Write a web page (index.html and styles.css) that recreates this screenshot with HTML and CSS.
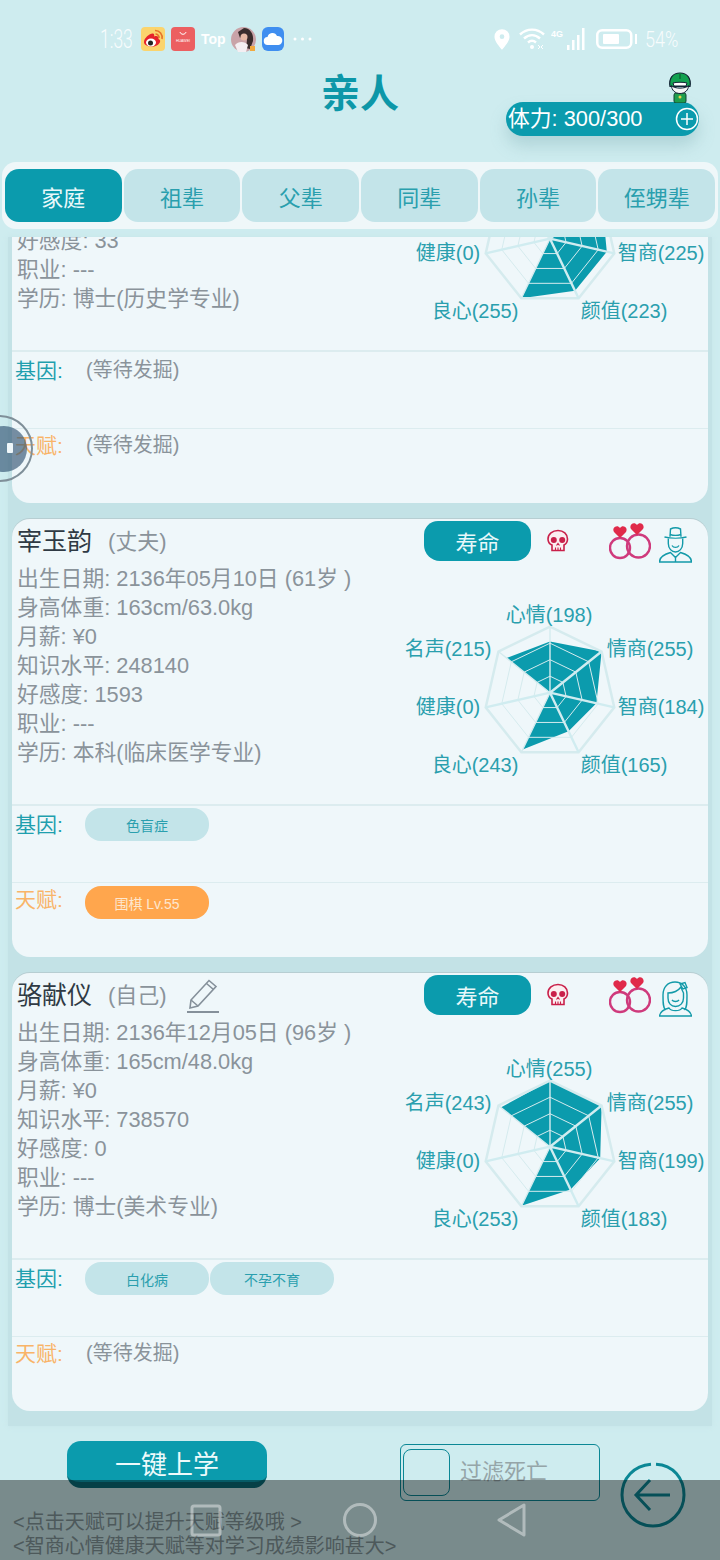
FILE: index.html
```html
<!DOCTYPE html>
<html lang="zh-CN">
  <head>
    <meta charset="utf-8" />
    <title>亲人</title>
    <link rel="stylesheet" href="styles.css">
  </head>

  <body>
    <div class="screen">
      <!-- Status bar -->
      <div class="status-bar">
        <div class="status-left">
          <span class="status-time">1:33</span>
          <svg class="app-icon" width="24" height="24" viewBox="0 0 24 24">
            <rect width="24" height="24" rx="4" fill="#fbd46d"/>
            <path d="M3 15c0-4 6-9 9-8.500 2 .5 1 3 1 3 3-1 5 0 4.500 2.500 2 1 2 2.500 1 4-2 3-6 4-9 3.500-4-.5-6.500-2-6.500-4.500z" fill="#e6232b"/>
            <ellipse cx="10" cy="15.500" rx="5" ry="4" fill="#fff"/>
            <circle cx="9.500" cy="16" r="2.500" fill="#222"/>
            <path d="M14 3.500a7 7 0 0 1 7 8.500M14.500 7a3.500 3.500 0 0 1 3.500 4" fill="none" stroke="#e6732b" stroke-width="1.600"/>
          </svg>
          <svg class="app-icon" width="24" height="24" viewBox="0 0 24 24">
            <rect width="24" height="24" rx="4" fill="#ec5f61"/>
            <path d="M9 5c.6 3 5.400 3 6 0" fill="none" stroke="#fff" stroke-width="1"/>
            <text x="12" y="14.500" class="huawei-text">HUAWEI</text>
          </svg>
          <span class="status-top">Top</span>
          <svg class="app-icon" width="25" height="25" viewBox="0 0 25 25">
            <circle cx="12.500" cy="12.500" r="12.500" fill="#c9a3a8"/>
            <path d="M13 1c6 0 10 6 9 13l-3 8-4-1 1-8-3-6-4 4-2-6z" fill="#3a2c2c"/>
            <circle cx="13" cy="10" r="3.500" fill="#e7b9a5"/>
            <path d="M4 18c3-4 10-4 13 0l-2 7H7z" fill="#f4eef2"/>
            <rect x="19" y="19" width="5" height="5" fill="#f2a93e"/>
          </svg>
          <svg class="app-icon" width="22" height="24" viewBox="0 0 22 24">
            <rect width="22" height="24" rx="6" fill="#3f8ef0"/>
            <path d="M6 18a4 4 0 0 1-.5-8 5 5 0 0 1 9.500-1 4.500 4.500 0 0 1 1.500 9z" fill="#fff"/>
          </svg>
          <svg class="status-more" width="19" height="4" viewBox="0 0 19 4" fill="#fff">
            <circle cx="2" cy="2" r="1.500"/>
            <circle cx="9.500" cy="2" r="1.500"/>
            <circle cx="17" cy="2" r="1.500"/>
          </svg>
        </div>
        <div class="status-right">
          <svg width="16" height="21" viewBox="0 0 17 22">
            <path fill-rule="evenodd" d="M8.500 0a8 8 0 0 1 8 8c0 5-5 10-8 14-3-4-8-9-8-14a8 8 0 0 1 8-8zm0 5.500a2.500 2.500 0 1 0 0 5 2.500 2.500 0 0 0 0-5z" fill="#fff"/>
          </svg>
          <svg class="wifi-icon" width="28" height="22" viewBox="0 0 28 22" fill="none" stroke="#fff" stroke-width="2.400">
            <path d="M1 6.500c7-6.500 17-6.500 24 0M5 10.500c5-4.500 11-4.500 16 0M9 14.500c2.500-2.200 5.500-2.200 8 0"/>
            <circle cx="13" cy="19" r="2" fill="#fff" stroke="none"/>
            <path d="M19 17l2 2-2 2M24 17l-2 2 2 2" stroke-width="1"/>
          </svg>
          <svg class="signal-icon" width="36" height="22" viewBox="0 0 36 22">
            <text x="0" y="9" class="signal-text">4G</text>
            <g fill="#fff">
              <rect x="16" y="17" width="2.500" height="5"/>
              <rect x="21" y="12" width="2.500" height="10"/>
              <rect x="26" y="7" width="2.500" height="15"/>
              <rect x="31" y="0" width="2.500" height="22"/>
            </g>
          </svg>
          <svg class="battery-icon" width="41" height="20" viewBox="0 0 41 20">
            <rect x="1.250" y="1.250" width="34" height="17.500" rx="5" fill="none" stroke="#fff" stroke-width="2.500"/>
            <rect x="7" y="5" width="16" height="10" rx="1" fill="#fff"/>
            <rect x="39" y="5" width="2" height="10" fill="#fff"/>
          </svg>
          <span class="status-battery">54%</span>
        </div>
      </div>

      <!-- Title row -->
      <div class="title-row">
        <h1 class="page-title">亲人</h1>
        <div class="stamina">
          <span class="stamina-text">体力: 300/300</span>
          <svg width="24" height="24" viewBox="0 0 24 24" fill="none" stroke="#fff" stroke-width="1.500">
            <circle cx="12" cy="12" r="10.500"/>
            <path d="M12 6v12M6 12h12"/>
          </svg>
        </div>
      </div>

      <!-- Generation tabs -->
      <div class="tabs">
        <div class="tab tab-active">家庭</div>
        <div class="tab">祖辈</div>
        <div class="tab">父辈</div>
        <div class="tab">同辈</div>
        <div class="tab">孙辈</div>
        <div class="tab">侄甥辈</div>
      </div>

      <!-- Relatives list, scrolled part way through the first card -->
      <div class="list">
        <div class="card card-first">
          <div class="card-top">
            <div class="info">
              <div class="name-row"><span class="name">---</span> <span class="relation">(父亲)</span></div>
              <div class="info-line">出生日期: ---</div>
              <div class="info-line">身高体重: ---</div>
              <div class="info-line">月薪: ¥0</div>
              <div class="info-line">知识水平: ---</div>
              <div class="info-line">好感度: 33</div>
              <div class="info-line">职业: ---</div>
              <div class="info-line">学历: 博士(历史学专业)</div>
            </div>
            <div class="side">
              <div class="actions">
                <div class="life-btn">寿命</div>
              </div>
              <svg class="radar" width="304" height="180" viewBox="0 0 304 180">
                <defs>
                  <g id="radar-grid" fill="none">
                    <polygon class="ring-outer" points="0,-66 51.600,-41.200 64.300,14.700 28.600,59.500 -28.600,59.500 -64.300,14.700 -51.600,-41.200"/>
                    <polygon class="ring" transform="scale(.75)" points="0,-66 51.600,-41.200 64.300,14.700 28.600,59.500 -28.600,59.500 -64.300,14.700 -51.600,-41.200"/>
                    <polygon class="ring" transform="scale(.5)" points="0,-66 51.600,-41.200 64.300,14.700 28.600,59.500 -28.600,59.500 -64.300,14.700 -51.600,-41.200"/>
                    <polygon class="ring" transform="scale(.25)" points="0,-66 51.600,-41.200 64.300,14.700 28.600,59.500 -28.600,59.500 -64.300,14.700 -51.600,-41.200"/>
                    <path class="spoke" d="M0 0L0 -66M0 0L-28.600 59.500M0 0L-51.600 -41.200"/>
                    <path class="spoke-thick" d="M0 0L51.600 -41.200M0 0L64.300 14.700M0 0L28.600 59.500M0 0L-64.300 14.700"/>
                  </g>
                  <g id="icon-skull">
                    <path d="M11 1.500c5.500 0 9.500 3.500 9.500 8.500 0 3-1.500 5-3.500 6v5.500H5V16C2.500 15 1 13 1 10c0-5 4.500-8.500 10-8.500z" fill="#fbeef0" stroke="#c9204a" stroke-width="1.600"/>
                    <circle cx="6.800" cy="11" r="3" fill="#c9204a"/>
                    <circle cx="15.200" cy="11" r="3" fill="#c9204a"/>
                    <path d="M9.500 16.500l1.500-2 1.500 2M8.500 18.500v3M11 18.500v3M13.500 18.500v3" fill="none" stroke="#c9204a" stroke-width="1.100"/>
                  </g>
                  <g id="icon-rings">
                    <circle cx="11" cy="25" r="10" fill="none" stroke="#cf3a7c" stroke-width="2.400"/>
                    <circle cx="29.500" cy="23" r="11.500" fill="none" stroke="#cf3a7c" stroke-width="2.400"/>
                    <path transform="translate(11 8)" d="M0 7L-6 1C-8.500-3-3-7 0-3C3-7 8.500-3 6 1z" fill="#e02a4a"/>
                    <path transform="translate(28 5)" d="M0 7L-6 1C-8.500-3-3-7 0-3C3-7 8.500-3 6 1z" fill="#e02a4a"/>
                  </g>
                </defs>
                <g transform="translate(146 92.700)">
                  <polygon class="radar-value" points="0,-60 51.600,-41.200 56.800,13 25,52 -28.600,59.500 0,0 -40,-32"/>
                  <use href="#radar-grid"/>
                </g>
                <text class="radar-label" x="145" y="22">心情(200)</text>
                <text class="radar-label" x="246" y="56">情商(255)</text>
                <text class="radar-label" x="257" y="114">智商(225)</text>
                <text class="radar-label" x="220" y="172">颜值(223)</text>
                <text class="radar-label" x="71" y="172">良心(255)</text>
                <text class="radar-label" x="44" y="114">健康(0)</text>
                <text class="radar-label" x="44" y="56">名声(200)</text>
              </svg>
            </div>
          </div>
          <div class="trait-row">
            <span class="trait-label">基因:</span>
            <span class="pending">(等待发掘)</span>
          </div>
          <div class="trait-row">
            <span class="trait-label trait-talent">天赋:</span>
            <span class="pending">(等待发掘)</span>
          </div>
        </div>

        <div class="card">
          <div class="card-top">
            <div class="info">
              <div class="name-row"><span class="name">宰玉韵</span> <span class="relation">(丈夫)</span></div>
              <div class="info-line">出生日期: 2136年05月10日 (61岁 )</div>
              <div class="info-line">身高体重: 163cm/63.0kg</div>
              <div class="info-line">月薪: ¥0</div>
              <div class="info-line">知识水平: 248140</div>
              <div class="info-line">好感度: 1593</div>
              <div class="info-line">职业: ---</div>
              <div class="info-line">学历: 本科(临床医学专业)</div>
            </div>
            <div class="side">
              <div class="actions">
                <div class="life-btn">寿命</div>
                <svg class="skull" width="22" height="24" viewBox="0 0 22 24"><use href="#icon-skull"/></svg>
                <svg class="rings" width="42" height="37" viewBox="0 0 42 37"><use href="#icon-rings"/></svg>
                <svg class="person" width="33" height="36" viewBox="0 0 33 36" fill="none" stroke="#139aa9" stroke-width="1.400">
                  <path d="M11 9.700L11.500 2c3-1.500 7-1.500 10 0l.5 7.700"/>
                  <path d="M5.500 10c6 1.500 16 1.500 22 0"/>
                  <path d="M11 7.500c3 1 8 1 11 0"/>
                  <path d="M9.300 11.500v5c0 5 3.500 8.500 7.200 8.500s7.200-3.500 7.200-8.500v-5"/>
                  <path d="M13 18.500c1.500 2.500 5.500 2.500 7 0"/>
                  <path d="M0.500 35c0-5 4-7.500 11-9.500l5 5 5-5c7 2 11 4.500 11 9.500z"/>
                  <path d="M16.500 30.500v4.500"/>
                </svg>
              </div>
              <svg class="radar" width="304" height="180" viewBox="0 0 304 180">
                <g transform="translate(146 92.700)">
                  <polygon class="radar-value" points="0,-51.200 51.600,-41.200 46.400,10.600 18.500,38.500 -27.300,56.700 0,0 -43.500,-34.700"/>
                  <use href="#radar-grid"/>
                </g>
                <text class="radar-label" x="145" y="22">心情(198)</text>
                <text class="radar-label" x="246" y="56">情商(255)</text>
                <text class="radar-label" x="257" y="114">智商(184)</text>
                <text class="radar-label" x="220" y="172">颜值(165)</text>
                <text class="radar-label" x="71" y="172">良心(243)</text>
                <text class="radar-label" x="44" y="114">健康(0)</text>
                <text class="radar-label" x="44" y="56">名声(215)</text>
              </svg>
            </div>
          </div>
          <div class="trait-row">
            <span class="trait-label">基因:</span>
            <span class="chip">色盲症</span>
          </div>
          <div class="trait-row">
            <span class="trait-label trait-talent">天赋:</span>
            <span class="chip chip-talent">围棋 Lv.55</span>
          </div>
        </div>

        <div class="card">
          <div class="card-top">
            <div class="info">
              <div class="name-row">
                <span class="name">骆献仪</span> <span class="relation">(自己)</span>
                <svg class="pencil" width="32" height="36" viewBox="0 0 32 36" fill="none" stroke="#85909a" stroke-width="1.600">
                  <path d="M4 23L22 3.500l7 6L11 29l-8 2z"/>
                  <path d="M19.500 6.500l7 6M4 23l7 6"/>
                  <path d="M0 35h32" stroke-width="2"/>
                </svg>
              </div>
              <div class="info-line">出生日期: 2136年12月05日 (96岁 )</div>
              <div class="info-line">身高体重: 165cm/48.0kg</div>
              <div class="info-line">月薪: ¥0</div>
              <div class="info-line">知识水平: 738570</div>
              <div class="info-line">好感度: 0</div>
              <div class="info-line">职业: ---</div>
              <div class="info-line">学历: 博士(美术专业)</div>
            </div>
            <div class="side">
              <div class="actions">
                <div class="life-btn">寿命</div>
                <svg class="skull" width="22" height="24" viewBox="0 0 22 24"><use href="#icon-skull"/></svg>
                <svg class="rings" width="42" height="37" viewBox="0 0 42 37"><use href="#icon-rings"/></svg>
                <svg class="person" width="33" height="36" viewBox="0 0 33 36" fill="none" stroke="#139aa9" stroke-width="1.400">
                  <path d="M6.500 29C4 27 4 22 4 14 4 6 9 1 16 1s12 5 12 13c0 8 0 13-2.500 15"/>
                  <path d="M9 12c5 0 10-2 13-6 1 3 2 5 2.500 6v5c0 5-3.500 8.500-8 8.500S9 22 9 17z"/>
                  <path d="M13 19c1.500 2 5.500 2 7 0"/>
                  <path d="M21 3l5-1.500 2 5-4 1.500z"/>
                  <path d="M0.500 35c.5-4 4-6.500 9.500-8 2 3.500 11 3.500 13 0 5.500 1.500 9 4 9.500 8z"/>
                </svg>
              </div>
              <svg class="radar" width="304" height="180" viewBox="0 0 304 180">
                <g transform="translate(146 92.700)">
                  <polygon class="radar-value" points="0,-66 51.600,-41.200 50.200,11.500 20.600,42.700 -28.400,59 0,0 -49.200,-39.200"/>
                  <use href="#radar-grid"/>
                </g>
                <text class="radar-label" x="145" y="22">心情(255)</text>
                <text class="radar-label" x="246" y="56">情商(255)</text>
                <text class="radar-label" x="257" y="114">智商(199)</text>
                <text class="radar-label" x="220" y="172">颜值(183)</text>
                <text class="radar-label" x="71" y="172">良心(253)</text>
                <text class="radar-label" x="44" y="114">健康(0)</text>
                <text class="radar-label" x="44" y="56">名声(243)</text>
              </svg>
            </div>
          </div>
          <div class="trait-row">
            <span class="trait-label">基因:</span>
            <span class="chip">白化病</span>
            <span class="chip">不孕不育</span>
          </div>
          <div class="trait-row">
            <span class="trait-label trait-talent">天赋:</span>
            <span class="pending">(等待发掘)</span>
          </div>
        </div>
      </div>

      <!-- Bottom actions -->
      <div class="bottom-row">
        <div class="school-btn">一键上学</div>
        <div class="filter">
          <span class="filter-box"></span>
          <span class="filter-text">过滤死亡</span>
        </div>
        <svg class="back-icon" width="66" height="66" viewBox="0 0 66 66" fill="none" stroke="#0b8795" stroke-width="3">
          <path d="M36 2.200C53 3 64 16 64 33c0 17-14 31-31 31S2 50 2 33C2 16 14 3.500 31 2.200"/>
          <path d="M50 33H16M30 18L16 33l14 15"/>
        </svg>
      </div>
      <div class="hints">
        <div>&lt;点击天赋可以提升天赋等级哦 &gt;</div>
        <div>&lt;智商心情健康天赋等对学习成绩影响甚大&gt;</div>
      </div>

      <!-- System overlays -->
      <svg class="sprite" width="24" height="31" viewBox="0 0 24 31">
        <rect x="6" y="21" width="12" height="10" rx="2" fill="#1f9e4d" stroke="#143" stroke-width="1"/>
        <circle cx="12" cy="25" r="1.500" fill="#e8d44a"/>
        <path d="M2 14.500C.5 6 5 1 12 1s11.500 5 10 13.500z" fill="#12a150" stroke="#123" stroke-width="1.200"/>
        <path d="M3.500 13.500C6 17 18 17 20.500 13.500 20.500 18 17 21.500 12 21.500S3.500 18 3.500 13.500z" fill="#f6f6f6" stroke="#123" stroke-width="1"/>
        <path d="M5 11c3-1 11-1 14 0l-1 3H6z" fill="#fff" stroke="#123" stroke-width="1"/>
        <path d="M12 1v6" stroke="#0c7a3c" stroke-width="2"/>
      </svg>

      <div class="float-ball">
        <div class="float-ball-inner"><span class="float-ball-mark"></span></div>
      </div>

      <div class="nav-bar">
        <svg width="720" height="80" viewBox="0 0 720 80" fill="none" stroke="#fff" stroke-opacity=".42" stroke-width="3">
          <rect x="192" y="26" width="28" height="29" rx="2"/>
          <circle cx="360" cy="40" r="15.500"/>
          <path d="M524 25v30l-25-15z" stroke-linejoin="round"/>
        </svg>
      </div>
    </div>
  </body>
</html>
```

FILE: styles.css
```css
* {
  box-sizing: border-box;
}
body {
  margin: 0;
  font-family: "Liberation Sans", "Noto Sans CJK SC", sans-serif;
}
.screen {
  position: relative;
  width: 720px;
  height: 1560px;
  overflow: hidden;
  background-color: #ceecef;
}
.status-bar {
  height: 78px;
  display: flex;
  justify-content: space-between;
  align-items: center;
  padding: 0 37px 0 100px;
  color: #fff;
}
.status-left,
.status-right {
  display: flex;
  align-items: center;
}
.status-left {
  gap: 6px;
}
.status-time {
  width: 35px;
  font-family: Roboto, sans-serif;
  font-size: 25px;
  font-weight: 300;
  opacity: .85;
  white-space: nowrap;
  transform: scaleX(.7);
  transform-origin: left center;
}
.status-top {
  width: 24px;
  font-size: 14px;
  font-weight: bold;
  white-space: nowrap;
}
.status-more {
  margin-left: 3px;
}
.wifi-icon {
  margin-left: 9px;
}
.signal-icon {
  margin-left: 4px;
}
.battery-icon {
  margin-left: 9px;
}
.status-battery {
  width: 38px;
  margin-left: 8px;
  font-family: Roboto, sans-serif;
  font-size: 22px;
  font-weight: 300;
  opacity: .85;
  white-space: nowrap;
  transform: scaleX(.82);
  transform-origin: left center;
}
.huawei-text {
  font-size: 3.500px;
  fill: #fff;
  text-anchor: middle;
}
.signal-text {
  font-size: 9px;
  font-weight: bold;
  fill: #fff;
}
.title-row {
  height: 84px;
  display: grid;
  grid-template-columns: 1fr auto 1fr;
}
.page-title {
  grid-column: 2;
  margin: -4px 0 0 0;
  height: 40px;
  font-size: 39px;
  line-height: 40px;
  font-weight: bold;
  color: #0d97a8;
}
.stamina {
  grid-column: 3;
  justify-self: end;
  margin: 24px 21px 0 0;
  width: 193px;
  height: 34px;
  display: flex;
  justify-content: space-between;
  align-items: center;
  padding: 0 0 0 2px;
  border-radius: 17px;
  background-color: #0b9bad;
  box-shadow: 0 10px 16px rgba(120, 170, 175, .35);
  color: #fff;
  font-size: 21.800px;
  white-space: nowrap;
}
.stamina-text {
  margin-top: -5px;
}
.tabs {
  margin: 0 2px;
  height: 67px;
  display: grid;
  grid-template-columns: repeat(6, 1fr);
  gap: 2px;
  padding: 7px 3px;
  border-radius: 14px;
  background-color: #eff7f9;
}
.tab {
  display: flex;
  justify-content: center;
  align-items: center;
  border-radius: 14px;
  background-color: #c3e4e9;
  color: #2a9fae;
  font-size: 22px;
}
.tab-active {
  background-color: #0b9bad;
  color: #e8f8fa;
}
.list {
  margin: 8px 8px 0;
  height: 1189px;
  overflow: hidden;
  display: flex;
  flex-direction: column;
  gap: 16px;
  padding: 0 4px;
  background-color: #c3e2e6;
  box-shadow: 0 0 6px #c6e5e8;
}
.card {
  flex: 0 0 438px;
  border-radius: 18px;
  background-color: #eff7fa;
  box-shadow: 0 -1px 0 #b7ced2;
}
.card-first {
  margin-top: -172px;
}
.card-top {
  height: 287px;
  display: flex;
  justify-content: space-between;
  border-bottom: 2px solid #dcecef;
}
.info {
  padding: 0 0 0 5px;
}
.name-row {
  height: 45px;
  display: flex;
  align-items: center;
  gap: 10px;
  padding-bottom: 6px;
}
.name {
  font-size: 25px;
  color: #2f3a44;
}
.relation {
  margin-left: 6px;
  font-size: 22px;
  color: #8a939a;
}
.pencil {
  margin: 5px 0 0 10px;
}
.info-line {
  height: 29px;
  font-size: 21.800px;
  line-height: 29px;
  color: #8a939a;
  white-space: nowrap;
}
.side {
  width: 304px;
}
.actions {
  height: 81px;
  display: flex;
  align-items: flex-start;
  padding: 2px 0 0 20px;
}
.life-btn {
  flex: none;
  width: 107px;
  height: 40px;
  display: flex;
  justify-content: center;
  align-items: center;
  border-radius: 14px 14px 16px 16px;
  background-color: #0b9bad;
  color: #e8f8fa;
  font-size: 22px;
}
.skull {
  margin: 8px 0 0 16px;
}
.rings {
  margin: 2px 0 0 40px;
}
.person {
  margin: 6px 0 0 8px;
}
.radar {
  display: block;
}
.radar-value {
  fill: #0b9bad;
}
.ring-outer {
  stroke: #d5ebee;
  stroke-width: 2.500;
}
.ring {
  stroke: #d5ebee;
  stroke-width: 1;
  vector-effect: non-scaling-stroke;
}
.spoke {
  stroke: #d5ebee;
  stroke-width: 1.400;
}
.spoke-thick {
  stroke: #d0ecf0;
  stroke-width: 2.400;
}
.radar-label {
  font-size: 20px;
  fill: #2a9fae;
  text-anchor: middle;
}
.trait-row {
  height: 76px;
  display: flex;
  align-items: flex-start;
  padding: 2px 0 0 3px;
}
.trait-row + .trait-row {
  height: 75px;
  padding-top: 0;
  border-top: 1px solid #dcecef;
}
.trait-row + .trait-row .chip {
  margin-top: 3px;
}
.trait-label {
  flex: none;
  width: 70px;
  height: 33px;
  font-size: 21px;
  line-height: 33px;
  color: #1f9fae;
}
.trait-talent {
  color: #f9b468;
}
.pending {
  margin-left: 1px;
  height: 33px;
  font-size: 20px;
  line-height: 33px;
  color: #8a939a;
}
.chip {
  width: 124px;
  height: 33px;
  display: flex;
  justify-content: center;
  align-items: center;
  border-radius: 16px;
  background-color: #c3e4e9;
  color: #2a9fae;
  font-size: 14px;
}
.chip + .chip {
  margin-left: 1px;
}
.chip-talent {
  background-color: #ffa64d;
  color: #fde7cf;
}
.bottom-row {
  height: 84px;
  display: flex;
  align-items: flex-start;
  padding: 15px 0 0 67px;
}
.school-btn {
  width: 200px;
  height: 47px;
  display: flex;
  justify-content: center;
  align-items: center;
  padding-top: 1px;
  border-radius: 14px;
  border-bottom: 6px solid #0a6d79;
  background-color: #0b9bad;
  color: #eefafb;
  font-size: 26px;
}
.filter {
  margin: 3px 0 0 133px;
  width: 200px;
  height: 57px;
  display: flex;
  align-items: center;
  gap: 10px;
  padding: 0 2px;
  border: 1px solid #0b8795;
  border-radius: 6px;
}
.filter-box {
  width: 47px;
  height: 47px;
  border: 1px solid #0b8795;
  border-radius: 8px;
}
.filter-text {
  margin-top: -7px;
  font-size: 22px;
  color: #95a5a8;
}
.back-icon {
  margin: 21px 0 0 20px;
  flex: none;
}
.hints {
  padding-left: 13px;
  font-size: 20px;
  line-height: 24px;
  color: #84989b;
  white-space: nowrap;
}
.sprite {
  position: absolute;
  left: 668px;
  top: 72px;
}
.float-ball {
  position: absolute;
  left: -34px;
  top: 415px;
  width: 67px;
  height: 67px;
  display: flex;
  justify-content: center;
  align-items: center;
  border: 2px solid #7f8f99;
  border-radius: 50%;
}
.float-ball-inner {
  position: relative;
  margin-left: 9px;
  width: 46px;
  height: 46px;
  border-radius: 50%;
  background-color: rgba(50, 85, 115, .65);
}
.float-ball-mark {
  position: absolute;
  left: 26px;
  top: 17px;
  width: 6px;
  height: 10px;
  border-radius: 1px;
  background-color: #eff7fa;
}
.nav-bar {
  position: absolute;
  left: 0;
  top: 1480px;
  width: 720px;
  height: 80px;
  background-color: rgba(0, 0, 0, .41);
}
```
